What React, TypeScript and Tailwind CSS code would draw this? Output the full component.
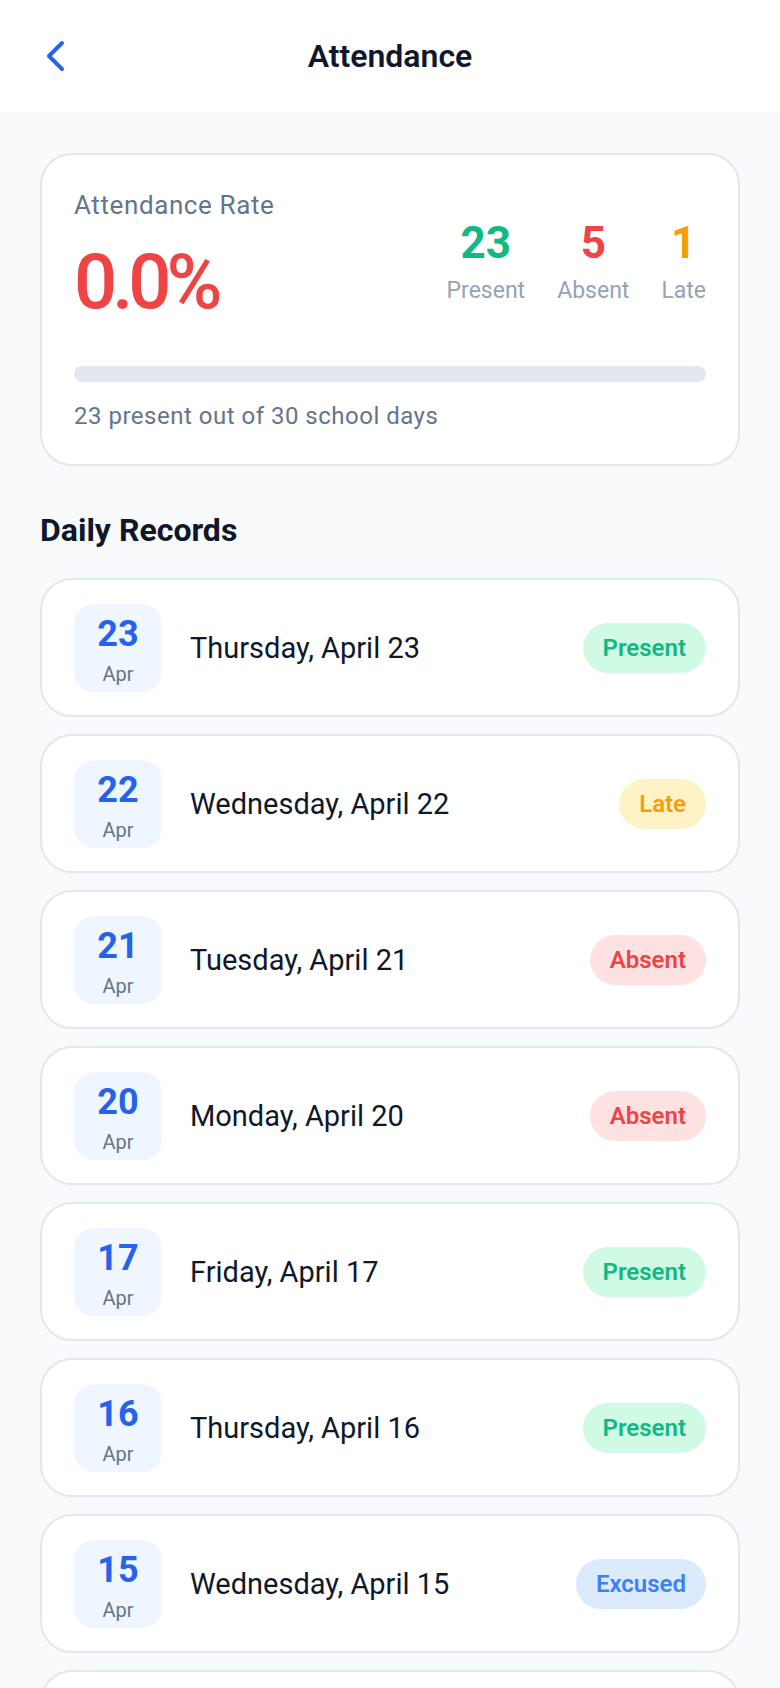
import React from "react";

type Status = "Present" | "Late" | "Absent" | "Excused";

const records: { day: number; label: string; status: Status }[] = [
  { day: 23, label: "Thursday, April 23", status: "Present" },
  { day: 22, label: "Wednesday, April 22", status: "Late" },
  { day: 21, label: "Tuesday, April 21", status: "Absent" },
  { day: 20, label: "Monday, April 20", status: "Absent" },
  { day: 17, label: "Friday, April 17", status: "Present" },
  { day: 16, label: "Thursday, April 16", status: "Present" },
  { day: 15, label: "Wednesday, April 15", status: "Excused" },
  { day: 14, label: "Tuesday, April 14", status: "Present" },
];

const badgeClass: Record<Status, string> = {
  Present: "bg-[#d1fae5] text-[#10b981]",
  Late: "bg-[#fef3c7] text-[#f59e0b]",
  Absent: "bg-[#fee2e2] text-[#ef4444]",
  Excused: "bg-[#dbeafe] text-[#3b82f6]",
};

function Stat({ value, label, color }: { value: string; label: string; color: string }) {
  return (
    <div className="flex flex-col items-center">
      <div className={`text-[44px] font-bold leading-[44px] ${color}`}>{value}</div>
      <div className="mt-[10px] text-[23px] leading-[32px] text-[#94a3b8]">{label}</div>
    </div>
  );
}

export default function App() {
  return (
    <div
      className="min-h-[1688px] w-full bg-[#f8fafc] pb-10"
      style={{ fontFamily: "Roboto, 'Noto Sans', sans-serif" }}
    >
      <header className="relative flex h-[112px] items-center justify-center bg-white">
        <button className="absolute left-[45px] top-[39px]" aria-label="Back">
          <svg width="22" height="34" viewBox="0 0 22 34" fill="none">
            <polyline
              points="17,4 4,17 17,30"
              stroke="#2563eb"
              strokeWidth="4"
              strokeLinecap="round"
              strokeLinejoin="round"
            />
          </svg>
        </button>
        <h1 className="text-[32px] font-semibold leading-[40px] text-[#0f172a]">Attendance</h1>
      </header>

      <section className="mx-10 mt-[41px] rounded-[32px] border-2 border-[#e2e8f0] bg-white p-8">
        <div className="flex items-start justify-between">
          <div className="flex flex-col">
            <div className="text-[26px] leading-[36px] tracking-[0.6px] text-[#64748b]">
              Attendance Rate
            </div>
            <div className="mt-[21px] text-[76px] font-medium leading-[76px] tracking-[-5px] text-[#ef4444]">
              0.0%
            </div>
          </div>
          <div className="mt-[34px] flex gap-8">
            <Stat value="23" label="Present" color="text-[#10b981]" />
            <Stat value="5" label="Absent" color="text-[#ef4444]" />
            <Stat value="1" label="Late" color="text-[#f59e0b]" />
          </div>
        </div>
        <div className="mt-[46px] h-4 w-full rounded-full bg-[#e2e8f0]" />
        <div className="mt-[18px] text-[24px] leading-[32px] tracking-[0.5px] text-[#64748b]">
          23 present out of 30 school days
        </div>
      </section>

      <h2 className="mx-10 mt-[44px] text-[32px] font-bold leading-[40px] text-[#0f172a]">
        Daily Records
      </h2>

      <div className="mx-10 mt-[28px] flex flex-col gap-[17px]">
        {records.map((r) => (
          <div
            key={r.day}
            className="flex items-center rounded-[32px] border-2 border-[#e2e8f0] bg-white px-8 pb-[23px] pt-[24px]"
          >
            <div className="flex h-[88px] w-[88px] shrink-0 flex-col items-center rounded-[20px] bg-[#eff6ff] pt-[10px]">
              <div className="text-[36px] font-bold leading-[40px] text-[#2563eb]">{r.day}</div>
              <div className="mt-[8px] text-[20px] leading-[24px] text-[#64748b]">Apr</div>
            </div>
            <div className="ml-[28px] flex-1 text-[29px] leading-[36px] text-[#0f172a]">{r.label}</div>
            <div
              className={`flex h-[50px] items-center rounded-full px-5 text-[24px] font-semibold ${badgeClass[r.status]}`}
            >
              {r.status}
            </div>
          </div>
        ))}
      </div>
    </div>
  );
}
